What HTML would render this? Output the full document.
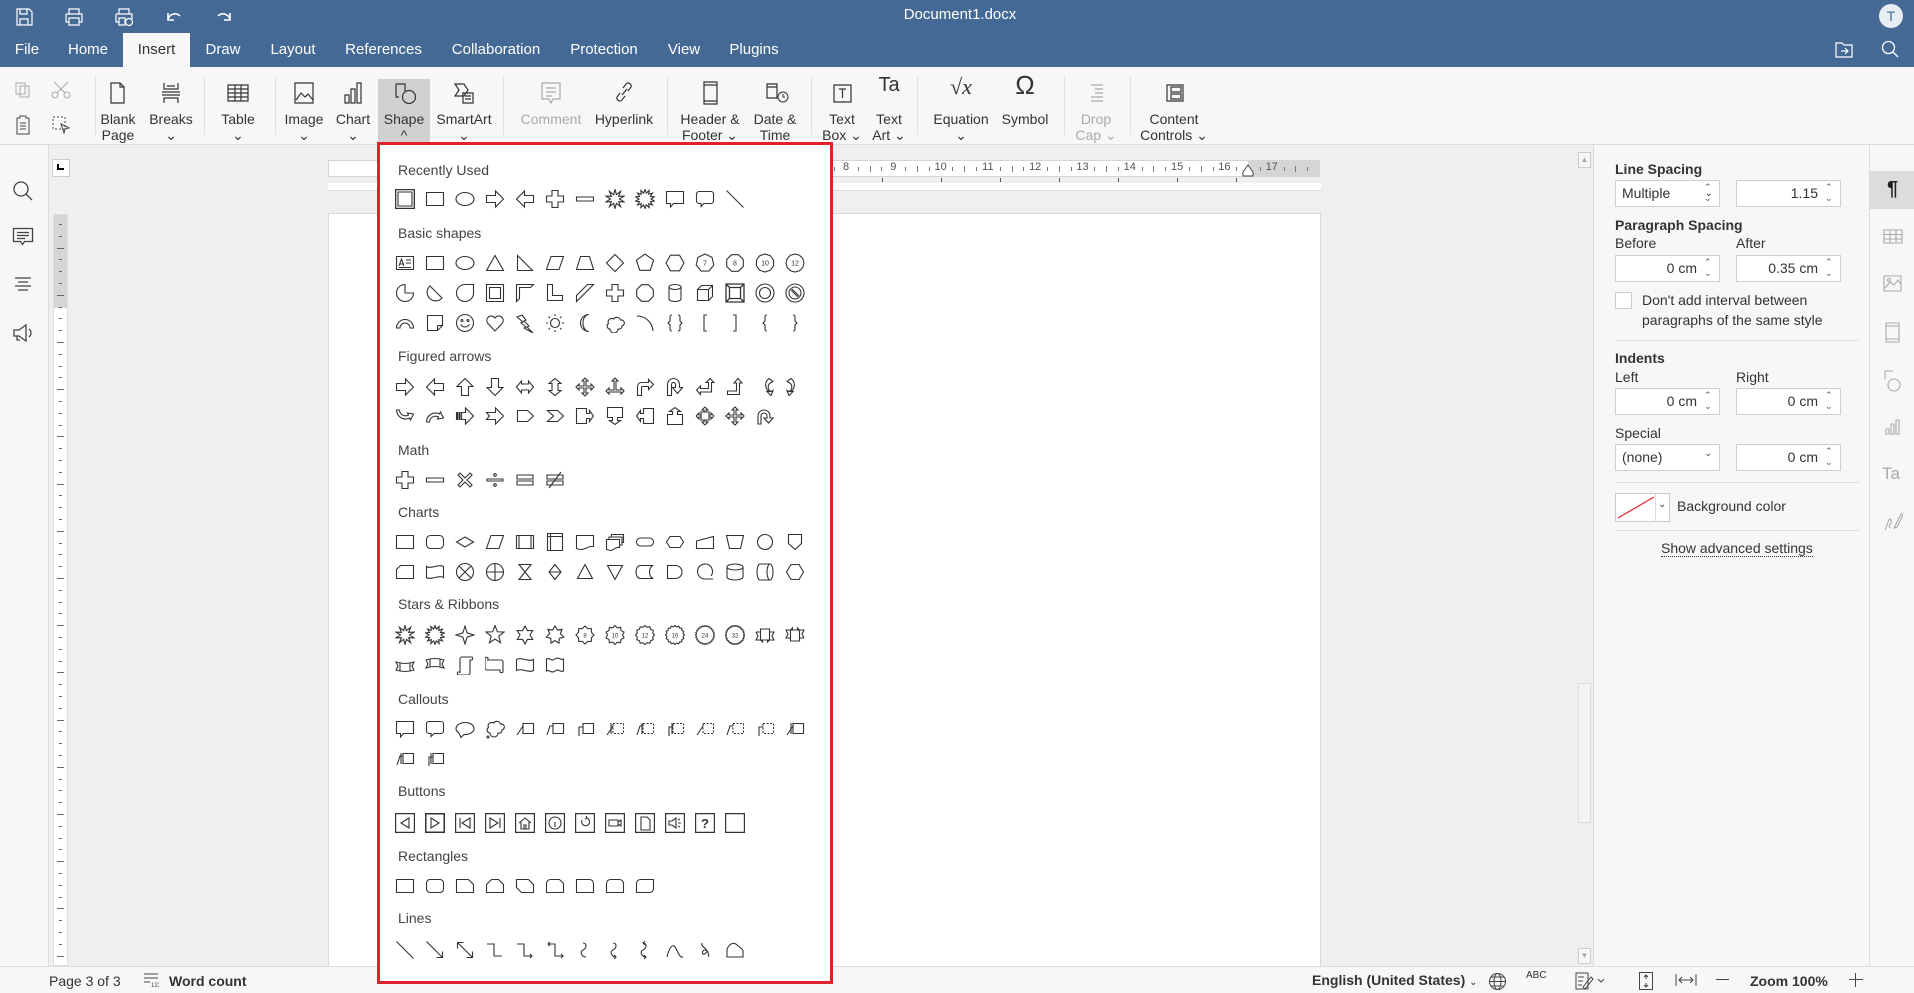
<!DOCTYPE html>
<html><head><meta charset="utf-8">
<style>
*{box-sizing:border-box;margin:0;padding:0}
body{width:1914px;height:993px;overflow:hidden;position:relative;font-family:"Liberation Sans",Arial,sans-serif;background:#efefef;color:#333}
.a{position:absolute}
#top{left:0;top:0;width:1914px;height:67px;background:#446995;color:#fff}
.tab{position:absolute;top:33px;height:34px;line-height:34px;font-size:15px;color:#fff;text-align:center}
#tb{left:0;top:67px;width:1914px;height:78px;background:#f7f7f7;border-bottom:1px solid #dcdcdc}
.lbl{position:absolute;font-size:14px;line-height:16px;text-align:center;color:#333;white-space:nowrap}
.sep{position:absolute;top:10px;width:1px;height:58px;background:#e0e0e0}
.ico{position:absolute}
#left{left:0;top:145px;width:49px;height:821px;background:#f7f7f7;border-right:1px solid #dcdcdc}
#status{left:0;top:966px;width:1914px;height:27px;background:#f7f7f7;border-top:1px solid #dcdcdc;font-size:14px}
#rp{left:1593px;top:145px;width:276px;height:821px;background:#f7f7f7;border-left:1px solid #dcdcdc}
#rs{left:1869px;top:145px;width:45px;height:821px;background:#f7f7f7;border-left:1px solid #dcdcdc}
.rl{position:absolute;font-size:14px;color:#333}
.b{font-weight:bold}
.in{position:absolute;height:27px;background:#fff;border:1px solid #cfcfcf;font-size:14px;line-height:25px;padding:0 6px}
#dd{left:377px;top:142px;width:456px;height:842px;background:#fff;border:3px solid #e3212b}
.h{position:absolute;left:18px;font-size:14px;color:#444}
</style></head><body>

<div id="top" class="a">
 <svg class="a" style="left:14px;top:7px" width="20" height="20" viewBox="0 0 20 20" fill="none" stroke="#fff" stroke-width="1.2"><path d="M3 2h12l3 3v13H3z M6 2v5h7V2 M6 12h8v6H6z"/></svg>
 <svg class="a" style="left:64px;top:7px" width="20" height="20" viewBox="0 0 20 20" fill="none" stroke="#fff" stroke-width="1.2"><path d="M5 7V2h10v5 M2 7h16v8h-3 M5 15H2V7 M5 11h10v7H5z"/></svg>
 <svg class="a" style="left:114px;top:7px" width="20" height="20" viewBox="0 0 20 20" fill="none" stroke="#fff" stroke-width="1.2"><path d="M5 7V2h10v5 M2 7h16v5 M5 15H2V7 M5 11h6v7H5z"/><circle cx="15" cy="15" r="3.5"/></svg>
 <svg class="a" style="left:164px;top:8px" width="20" height="18" viewBox="0 0 20 18" fill="none" stroke="#fff" stroke-width="1.6"><path d="M4 12a7 7 0 0 1 12-4 M4 5v7h6"/></svg>
 <svg class="a" style="left:214px;top:8px" width="20" height="18" viewBox="0 0 20 18" fill="none" stroke="#fff" stroke-width="1.6"><path d="M16 12a7 7 0 0 0-12-4 M16 5v7h-6"/></svg>
 <div class="a" style="left:860px;top:6px;width:200px;text-align:center;font-size:15px;color:#fff">Document1.docx</div>
 <div class="a" style="left:1879px;top:4px;width:24px;height:24px;border-radius:12px;background:#e9eef5;color:#446995;font-size:14px;text-align:center;line-height:24px">T</div>
 <div class="tab" style="left:8px;width:38px">File</div>
 <div class="tab" style="left:63px;width:50px">Home</div>
 <div class="tab" style="left:123px;width:67px;background:#f7f7f7;color:#333">Insert</div>
 <div class="tab" style="left:200px;width:46px">Draw</div>
 <div class="tab" style="left:265px;width:56px">Layout</div>
 <div class="tab" style="left:339px;width:89px">References</div>
 <div class="tab" style="left:447px;width:98px">Collaboration</div>
 <div class="tab" style="left:564px;width:80px">Protection</div>
 <div class="tab" style="left:663px;width:42px">View</div>
 <div class="tab" style="left:724px;width:60px">Plugins</div>
 <svg class="a" style="left:1834px;top:40px" width="20" height="20" viewBox="0 0 20 20" fill="none" stroke="#fff" stroke-width="1.2"><path d="M2 3h6l2 2h8v12H2z M7 11h7 M11 8l3 3-3 3"/></svg>
 <svg class="a" style="left:1880px;top:39px" width="20" height="20" viewBox="0 0 20 20" fill="none" stroke="#fff" stroke-width="1.3"><circle cx="8.5" cy="8.5" r="6"/><path d="M13 13l5 5"/></svg>
</div>

<div id="tb" class="a">
 <div class="a" style="left:378px;top:12px;width:52px;height:63px;background:#d0d0d0"></div>
 <div id="tbi"></div>
</div>

<div id="left" class="a">
 <svg class="a" style="left:12px;top:35px" width="22" height="22" viewBox="0 0 22 22" fill="none" stroke="#444" stroke-width="1.3"><circle cx="9" cy="9" r="7"/><path d="M14 14l6 6"/></svg>
 <svg class="a" style="left:12px;top:81px" width="22" height="22" viewBox="0 0 22 22" fill="none" stroke="#444" stroke-width="1.3"><path d="M1.5 2.5h19v13h-8l-2 3-2-3h-7z M5 6.5h12 M5 9.5h12 M5 12.5h8"/></svg>
 <svg class="a" style="left:12px;top:129px" width="22" height="22" viewBox="0 0 22 22" fill="none" stroke="#444" stroke-width="1.3"><path d="M3 4h16 M6 8h10 M3 12h16 M6 16h10"/></svg>
 <svg class="a" style="left:12px;top:177px" width="22" height="22" viewBox="0 0 22 22" fill="none" stroke="#444" stroke-width="1.3"><path d="M2 8h5l7-5v16l-7-5H2z M5 14v4h3 M17 7a5 5 0 0 1 0 8"/></svg>
</div>

<div class="a" style="left:52px;top:159px;width:18px;height:18px;background:#fff;border:1px solid #ccc"></div>
<div class="a" style="left:57px;top:164px;width:7px;height:6px;border-left:2px solid #000;border-bottom:2px solid #000"></div>
<div class="a" style="left:53px;top:214px;width:15px;height:752px;background:#fff;border:1px solid #ddd"></div>
<div class="a" style="left:54px;top:215px;width:13px;height:93px;background:#d5d5d5"></div>
<div id="vr"></div>
<div class="a" style="left:328px;top:160px;width:992px;height:17px;background:#fff;border:1px solid #d5d5d5"></div>
<div class="a" style="left:1248px;top:161px;width:71px;height:15px;background:#d5d5d5"></div>
<div id="hr"></div>
<div class="a" style="left:328px;top:183px;width:993px;height:8px;background:#fff;border-bottom:1px solid #ddd"></div>
<div class="a" style="left:328px;top:213px;width:993px;height:760px;background:#fff;border:1px solid #d8d8d8"></div>
<div class="a" style="left:1578px;top:152px;width:13px;height:814px;background:#efefef"></div>
<div class="a" style="left:1578px;top:152px;width:13px;height:16px;border:1px solid #ccc;background:#f7f7f7;font-size:8px;color:#aaa;text-align:center;line-height:14px">▲</div>
<div class="a" style="left:1578px;top:683px;width:13px;height:140px;border:1px solid #ddd;background:#f4f4f4"></div>
<div class="a" style="left:1578px;top:948px;width:13px;height:16px;border:1px solid #ccc;background:#f7f7f7;font-size:8px;color:#aaa;text-align:center;line-height:14px">▼</div>

<div id="rp" class="a">
 <div class="rl b" style="left:21px;top:16px">Line Spacing</div>
 <div class="in" style="left:21px;top:35px;width:105px">Multiple<span style="position:absolute;right:6px;font-size:10px">⌄</span></div>
 <div class="in" style="left:142px;top:35px;width:105px;text-align:right;padding-right:22px">1.15</div>
 <div class="rl b" style="left:21px;top:72px">Paragraph Spacing</div>
 <div class="rl" style="left:21px;top:90px">Before</div>
 <div class="rl" style="left:142px;top:90px">After</div>
 <div class="in" style="left:21px;top:110px;width:105px;text-align:right;padding-right:22px">0 cm</div>
 <div class="in" style="left:142px;top:110px;width:105px;text-align:right;padding-right:22px">0.35 cm</div>
 <div class="a" style="left:21px;top:147px;width:17px;height:17px;background:#fff;border:1px solid #ccc"></div>
 <div class="rl" style="left:48px;top:145px;line-height:20px">Don't add interval between<br>paragraphs of the same style</div>
 <div class="a" style="left:21px;top:195px;width:244px;height:1px;background:#ddd"></div>
 <div class="rl b" style="left:21px;top:205px">Indents</div>
 <div class="rl" style="left:21px;top:224px">Left</div>
 <div class="rl" style="left:142px;top:224px">Right</div>
 <div class="in" style="left:21px;top:243px;width:105px;text-align:right;padding-right:22px">0 cm</div>
 <div class="in" style="left:142px;top:243px;width:105px;text-align:right;padding-right:22px">0 cm</div>
 <div class="rl" style="left:21px;top:280px">Special</div>
 <div class="in" style="left:21px;top:299px;width:105px">(none)</div>
 <div class="in" style="left:142px;top:299px;width:105px;text-align:right;padding-right:22px">0 cm</div>
 <div class="a" style="left:21px;top:337px;width:244px;height:1px;background:#ddd"></div>
 <div class="a" style="left:21px;top:348px;width:55px;height:29px;background:#fff;border:1px solid #ccc"></div>
 <div class="a" style="left:61px;top:349px;width:1px;height:27px;background:#ddd"></div>
 <div class="a" style="left:64px;top:354px;font-size:10px;color:#444">⌄</div>
 <svg class="a" style="left:23px;top:351px" width="38" height="23"><path d="M1 22L37 1" stroke="#e3212b" stroke-width="1.2"/></svg>
 <div class="rl" style="left:83px;top:353px">Background color</div>
 <div class="a" style="left:21px;top:385px;width:244px;height:1px;background:#ddd"></div>
 <div class="rl" style="left:67px;top:395px;border-bottom:1px dotted #333">Show advanced settings</div>
 <div id="spins"></div>
</div>
<div id="rs" class="a">
 <div class="a" style="left:0;top:26px;width:45px;height:38px;background:#dcdcdc"></div>
 <div class="a" style="left:0;top:33px;width:45px;text-align:center;font-size:20px;font-weight:bold;color:#222">¶</div>
 <svg class="a" style="left:13px;top:83px" width="20" height="210" viewBox="0 0 20 210" fill="none" stroke="#aaa" stroke-width="1.1">
  <path d="M1 2h18v13H1z M1 6.5h18 M1 11h18 M7 2v13 M13 2v13"/>
  <path d="M1 48h17v15H1z M2 60l5-6 4 3 4-5 3 4"/><circle cx="6" cy="52" r="1.5"/>
  <path d="M3 95h13v19H3z M3 98h13 M3 111h13"/>
  <path d="M2 151v-8h8"/><circle cx="11" cy="157" r="6"/>
  <path d="M3 206h3v-5h-3z M8 206h3v-10h-3z M13 206h3v-14h-3z"/>
 </svg>
 <div class="a" style="left:12px;top:319px;font-size:17px;color:#aaa">Ta</div>
 <svg class="a" style="left:13px;top:365px" width="20" height="22" viewBox="0 0 20 22" fill="none" stroke="#aaa" stroke-width="1.1"><path d="M2 20c3-6 4-14 6-10s-5 6 0 8 M12 16l6-12 2 1-6 12-3 1z"/></svg>
</div>

<div id="status" class="a">
 <div class="a" style="left:49px;top:6px">Page 3 of 3</div>
 <svg class="a" style="left:143px;top:5px" width="16" height="16" viewBox="0 0 16 16" fill="none" stroke="#444"><path d="M1 2h14 M1 6h14 M1 10h6"/><text x="8" y="15" font-size="6" fill="#444" stroke="none">123</text></svg>
 <div class="a b" style="left:169px;top:6px">Word count</div>
 <div class="a b" style="left:1312px;top:5px">English (United States) <span style="font-weight:normal;font-size:10px">⌄</span></div>
 <svg class="a" style="left:1488px;top:5px" width="19" height="19" viewBox="0 0 19 19" fill="none" stroke="#444"><circle cx="9.5" cy="9.5" r="8"/><ellipse cx="9.5" cy="9.5" rx="3.5" ry="8"/><path d="M1.5 9.5h16 M3 5h13 M3 14h13"/></svg>
 <div class="a" style="left:1526px;top:3px;font-size:10px">ABC</div>
 <svg class="a" style="left:1574px;top:4px" width="34" height="20" viewBox="0 0 34 20" fill="none" stroke="#444"><path d="M2 2h12v16H2z M4 6h6 M4 10h5 M4 14h4 M9 16l8-10 2 2-8 10z M24 8l3 3 3-3"/></svg>
 <svg class="a" style="left:1638px;top:4px" width="16" height="20" viewBox="0 0 16 20" fill="none" stroke="#444"><path d="M1.5 1.5h13v17h-13z M8 4v4 M6 6l2-2 2 2 M8 16v-4 M6 14l2 2 2-2"/></svg>
 <svg class="a" style="left:1675px;top:6px" width="22" height="14" viewBox="0 0 22 14" fill="none" stroke="#444"><path d="M1 1v12 M21 1v12 M4 7h14 M7 4l-3 3 3 3 M15 4l3 3-3 3"/></svg>
 <div class="a" style="left:1716px;top:12px;width:13px;height:1px;background:#444"></div>
 <div class="a b" style="left:1750px;top:6px">Zoom 100%</div>
 <div class="a" style="left:1849px;top:12px;width:14px;height:1px;background:#444"></div>
 <div class="a" style="left:1855px;top:6px;width:1px;height:14px;background:#444"></div>
</div>

<div id="dd" class="a">
 <div class="h" style="top:17px">Recently Used</div>
 <div class="h" style="top:80px">Basic shapes</div>
 <div class="h" style="top:203px">Figured arrows</div>
 <div class="h" style="top:297px">Math</div>
 <div class="h" style="top:359px">Charts</div>
 <div class="h" style="top:451px">Stars &amp; Ribbons</div>
 <div class="h" style="top:546px">Callouts</div>
 <div class="h" style="top:638px">Buttons</div>
 <div class="h" style="top:703px">Rectangles</div>
 <div class="h" style="top:765px">Lines</div>
 <div id="grid"></div>
</div>

<script>
function P(d){return '<path d="'+d+'"/>';}
function star(n,ro,ri,t){var s='';for(var i=0;i<2*n;i++){var r=i%2?ri:ro,a=Math.PI*i/n-Math.PI/2;s+=(10+r*Math.cos(a)).toFixed(2)+','+(10+r*Math.sin(a)).toFixed(2)+' ';}return '<polygon points="'+s+'"/>'+(t?'<text x="10" y="12.3" font-size="6" text-anchor="middle" fill="#333" stroke="none" font-family="Liberation Sans">'+t+'</text>':'');}
function poly(n,r,t,off){var s='';off=off||0;for(var i=0;i<n;i++){var a=2*Math.PI*i/n-Math.PI/2+off;s+=(10+r*Math.cos(a)).toFixed(2)+','+(10+r*Math.sin(a)).toFixed(2)+' ';}return '<polygon points="'+s+'"/>'+(t?'<text x="10" y="12.5" font-size="7" text-anchor="middle" fill="#333" stroke="none" font-family="Liberation Sans">'+t+'</text>':'');}
function R(x,g){return '<g transform="rotate('+x+' 10 10)">'+g+'</g>';}
function F(g){return '<g transform="translate(20 0) scale(-1 1)">'+g+'</g>';}
var S={};
S.rect=P("M1.5 3.5h17v13h-17z");
S.dbl='<path d="M0.5 0.5h19v19h-19z" stroke-width="1.6"/>'+P("M3 3h14v14h-14z");
S.ell='<ellipse cx="10" cy="10" rx="9" ry="6.5"/>';
S.ra=P("M1.5 6.5h9v-4.5l8 8-8 8v-4.5h-9z");S.la=F(S.ra);S.ua=R(-90,S.ra);S.da=R(90,S.ra);
S.plus=P("M7 1.5h6v5.5h5.5v6h-5.5v5.5h-6v-5.5h-5.5v-6h5.5z");
S.minus=P("M1.5 8h17v4h-17z");
S.b1=star(10,9.5,4.5);S.b2=star(14,9.5,6);
S.crect=P("M1.5 2.5h17v12h-10l-3 3.5v-3.5h-4z");
S.cround=P("M4 2.5h12a2.5 2.5 0 0 1 2.5 2.5v7a2.5 2.5 0 0 1-2.5 2.5h-7l-3 3v-3h-2a2.5 2.5 0 0 1-2.5-2.5v-7a2.5 2.5 0 0 1 2.5-2.5z");
S.line=P("M1.5 1.5l17 17");
S.tbox=P("M1.5 3.5h17v13h-17z M4 13l2.5-7 2.5 7 M5 11h3 M11 7h5 M11 10h5 M4 14.5h12");
S.tri=P("M10 2.5l8.5 15h-17z");S.rtri=P("M2.5 2.5l15 15h-15z");
S.para=P("M6 3.5h12.5l-4.5 13h-12.5z");S.trap=P("M5.5 3.5h9l4 13h-17z");
S.dia=P("M10 1.5l8.5 8.5-8.5 8.5-8.5-8.5z");S.pent=poly(5,9);S.hex=poly(6,9,0,Math.PI/2);
S.p7=poly(7,9,'7');S.p8=poly(8,9,'8',Math.PI/8);S.p10=poly(10,9,'10');S.p12=poly(12,9,'12');
S.pie=P("M10 1.5a8.5 8.5 0 1 0 8.5 8.5h-8.5z");S.chord=P("M5 3a8.5 8.5 0 1 0 12 12z");
S.tear=P("M10 1.5h8.5v8.5a8.5 8.5 0 1 1-8.5-8.5z");
S.frame=P("M1.5 1.5h17v17h-17z M4.5 4.5h11v11h-11z");
S.half=P("M1.5 1.5h17l-3 3h-11v11l-3 3z");S.L=P("M2.5 1.5h5v11h10v5h-15z");
S.diag=P("M1.5 18.5v-6l11-11h6z");S.oct=poly(8,9,0,Math.PI/8);
S.can=P("M4 4a6 2.5 0 0 1 12 0v12a6 2.5 0 0 1-12 0z M4 4a6 2.5 0 0 0 12 0");
S.cube=P("M2.5 6.5h11v11h-11z M2.5 6.5l4-4h11v11l-4 4 M13.5 6.5l4-4");
S.bevel='<path d="M1 1h18v18h-18z M4.5 4.5h11v11h-11z M1 1l3.5 3.5 M19 1l-3.5 3.5 M1 19l3.5-3.5 M19 19l-3.5-3.5" stroke-width="1.3"/>';
S.donut='<circle cx="10" cy="10" r="9"/><circle cx="10" cy="10" r="5.5"/>';
S.no='<circle cx="10" cy="10" r="9"/><circle cx="10" cy="10" r="6"/>'+P("M6 7l7 7 M7 6l7 7");
S.arcb=P("M1.5 15a8.5 8.5 0 0 1 17 0h-3.5a5 5 0 0 0-10 0z");
S.fold=P("M2.5 2.5h15v10l-5 5h-10z M12.5 17.5v-5h5");
S.smile='<circle cx="10" cy="10" r="8.5"/><circle cx="7" cy="7.5" r="1"/><circle cx="13" cy="7.5" r="1"/>'+P("M5.5 11.5q4.5 5 9 0");
S.heart=P("M10 18l-7.5-8a4.5 4.5 0 0 1 7.5-5 4.5 4.5 0 0 1 7.5 5z");
S.bolt=P("M2 4l5-2 4 5-2 1 5 5-2 1 6 6-9-5 2-1-5-4 2-1z");
S.sun='<circle cx="10" cy="10" r="4.5"/>'+P("M10 1v2 M10 17v2 M1 10h2 M17 10h2 M3.5 3.5l1.5 1.5 M15 15l1.5 1.5 M3.5 16.5l1.5-1.5 M15 5l1.5-1.5");
S.moon=P("M14 1.5a8.5 8.5 0 0 0 0 17 6 8.5 0 0 1 0-17z");
S.cloud=P("M5 16a3 3 0 0 1-1.5-5.5 3.5 3.5 0 0 1 5-4.5 4 4 0 0 1 7 1 3 3 0 0 1 1.5 6 3 3 0 0 1-4 3 3.5 3.5 0 0 1-8 0z");
S.arc=P("M2 3a16 16 0 0 1 16 15");
S.bp=P("M7 2c-2 0-2 1-2 3v3l-2 2 2 2v3c0 2 0 3 2 3 M13 2c2 0 2 1 2 3v3l2 2-2 2v3c0 2 0 3-2 3");
S.bkl=P("M12 2h-3v16h3");S.bkr=F(S.bkl);
S.brl=P("M12 2c-2 0-2 1-2 3v3l-2 2 2 2v3c0 2 0 3 2 3");S.brr=F(S.brl);
S.lr=P("M1.5 10l5-6v3h7v-3l5 6-5 6v-3h-7v3z");S.ud=R(90,S.lr);
S.quad=P("M10 1l3 3h-2v5h5v-2l3 3-3 3v-2h-5v5h2l-3 3-3-3h2v-5h-5v2l-3-3 3-3v2h5v-5h-2z");
S.lru=P("M10 1l3 3h-2v9h5v-2l3 3-3 3v-2h-12v2l-3-3 3-3v2h5v-9h-2z");
S.bent=P("M2.5 18.5v-9a4 4 0 0 1 4-4h7v-3l5 5-5 5v-3h-6a1 1 0 0 0-1 1v8z");
S.ut=P("M2.5 18.5v-11a6 6 0 0 1 12 0v3h3l-5 6-5-6h3v-3a2 2 0 0 0-4 0v11z");
S.lu=P("M1.5 13l4-4v2.5h8v-6h-2.5l4-4 4 4h-2.5v9.5h-11v2.5z");
S.bu=P("M2.5 17.5v-3.5h9v-8h-2.5l4-4.5 4 4.5h-2.5v11.5z");
S.cr=P("M14 1.5a8 8 0 0 0 0 13l-2 0 4 4 2-5-2 1a5 5 0 0 1 0-9l2-1z");S.cl=F(S.cr);
S.cu=P("M1.5 4a9 9 0 0 0 13 8l1 2 3-6-6-1 1 2a6 6 0 0 1-9-5z");
S.cd=P("M1.5 16a9 9 0 0 1 13-8l1-2 3 6-6 1 1-2a6 6 0 0 0-9 5z");
S.str=P("M1.5 6.5h1v7h-1z M4 6.5h1v7h-1z M6.5 6.5h4v-4.5l8 8-8 8v-4.5h-4z");
S.notch=P("M1.5 6.5h9v-4.5l8 8-8 8v-4.5h-9l3-3.5z");
S.pentA=P("M2.5 4.5h10l6 5.5-6 5.5h-10z");S.chev=P("M2.5 4.5h10l6 5.5-6 5.5h-10l6-5.5z");
S.rc=P("M1.5 2.5h10v5h3v-3l4 5.5-4 5.5v-3h-3v5h-10z");S.dc=R(90,S.rc);S.lc=F(S.rc);S.uc=R(-90,S.rc);
S.qc=P("M6 6h8v8h-8z M10 1l3 3h-2v2 M10 1l-3 3h2v2 M10 19l3-3h-2v-2 M10 19l-3-3h2v-2 M1 10l3-3v2h2 M1 10l3 3v-2h2 M19 10l-3-3v2h-2 M19 10l-3 3v-2h-2");
S.qc2=S.quad;
S.circ=P("M3 18v-8a6 6 0 0 1 12 0v2h3l-4.5 5-4.5-5h3v-2a3 3 0 0 0-6 0v8z");
S.mul=P("M3 5l2-2 5 5 5-5 2 2-5 5 5 5-2 2-5-5-5 5-2-2 5-5z");
S.div=P("M2 9h16v2h-16z")+'<circle cx="10" cy="5" r="1.3"/><circle cx="10" cy="15" r="1.3"/>';
S.eq=P("M2 5h16v4h-16z M2 11h16v4h-16z");S.neq=S.eq+P("M4 18l12-16");
S.alt='<rect x="1.5" y="3.5" width="17" height="13" rx="4"/>';
S.dec=P("M10 5l8.5 5-8.5 5-8.5-5z");S.pre=P("M1.5 3.5h17v13h-17z M4 3.5v13 M16 3.5v13");
S.ist=P("M2.5 1.5h15v17h-15z M2.5 4.5h15 M5.5 1.5v17");
S.doc=P("M1.5 3.5h17v11c-5-1-8 3-12 3-3 0-5-1-5-1z");
S.mdoc=P("M1.5 7.5h13v8c-4-1-6 3-9 3l-4-1z M4 7.5v-2.5h13v8h-2.5 M6.5 5v-2.5h12v8h-1.5");
S.term='<rect x="1.5" y="6" width="17" height="8" rx="4"/>';
S.prep=P("M5 4.5h10l3.5 5.5-3.5 5.5h-10l-3.5-5.5z");
S.mi=P("M1.5 9l17-4.5v12h-17z");S.mo=P("M1.5 3.5h17l-3 13h-11z");
S.con='<circle cx="10" cy="10" r="7.5"/>';S.off=P("M3.5 2.5h13v9l-6.5 6-6.5-6z");
S.card=P("M5.5 3.5h13v13h-17v-9z");S.tape=P("M1.5 4.5c4 3 13-3 17 0v11c-4-3-13 3-17 0z");
S.sum='<circle cx="10" cy="10" r="8.5"/>'+P("M4 4l12 12 M16 4l-12 12");
S.or='<circle cx="10" cy="10" r="8.5"/>'+P("M10 1.5v17 M1.5 10h17");
S.col=P("M4 2.5h12l-12 15h12z");S.sort=P("M10 2.5l6 7.5-6 7.5-6-7.5z M4 10h12");
S.ext=P("M10 2.5l7.5 14h-15z");S.mer=P("M2.5 3.5h15l-7.5 14z");
S.sto=P("M5 3.5h13.5a4 6.5 0 0 0 0 13h-13.5a4 6.5 0 0 1 0-13z");
S.del=P("M2.5 3.5h8a6.5 6.5 0 0 1 0 13h-8z");S.seq=P("M18 17h-8a7.5 7.5 0 1 1 6-3");
S.disk=P("M2 5a8 3 0 0 1 16 0v10a8 3 0 0 1-16 0z M2 5a8 3 0 0 0 16 0");
S.dir=P("M5 2a3 8 0 0 0 0 16h10a3 8 0 0 0 0-16z M15 2a3 8 0 0 0 0 16");
S.disp=P("M6 2.5h8l4.5 7.5-4.5 7.5h-8l-4.5-7.5z");
S.s4=star(4,9,3);S.s5=star(5,9.5,4);S.s6=star(6,9,5);S.s7=star(7,9,5.5);
S.s8=star(8,9,7,'8');S.s10=star(10,9.5,7.5,'10');S.s12=star(12,9.5,8,'12');S.s16=star(16,9.5,8.3,'16');S.s24=star(24,9.5,8.5,'24');S.s32=star(32,9.5,8.7,'32');
S.rib=P("M1 7h4.5v-3h9v3h4.5l-2 4 2 4h-4.5 M1 7l2 4-2 4h4.5 M5.5 7v8h9v-8 M5.5 15l2 2v-2 M14.5 15l-2 2v-2");
S.ribd=R(180,S.rib);S.crib=P("M1 7q9 3 18 0l-2 4 2 4q-9 3-18 0l2-4z M5 8v8 M15 8v8");S.cribd=R(180,S.crib);
S.vs=P("M5 4a2 2 0 0 1 2-2h10a2 2 0 0 1 0 3h-2v13a2 2 0 0 1-2 2h-10a2 2 0 0 1 0-3h2z M5 17v1");
S.hs=R(90,S.vs);
S.wave=P("M1.5 4.5c5-3 12 3 17 0v11c-5 3-12-3-17 0z");S.dwave=P("M1.5 4c3-2 5 3 8.5 0s6 2 8.5 0v12c-3 2-5-3-8.5 0s-6-2-8.5 0z");
S.ovc='<path d="M4 14a9 6 0 1 1 5 1.5l-3 3z"/>';
S.clc=S.cloud.replace('M5 16','M5 14')+'<circle cx="3" cy="18" r="1"/>';
var L1=P("M8 4.5h10.5v10h-10.5z"),LD='<path d="M8 4.5h10.5v10h-10.5z" stroke-dasharray="2 1.5"/>';
S.lc1=L1+P("M8 7l-6 9");S.lc2=L1+P("M8 7h-3l-3 9");S.lc3=L1+P("M8 8h-4v9");
S.lc4=LD+P("M8 7l-6 9 M6 4v11");S.lc5=LD+P("M8 7h-3l-3 9 M7 4v11");S.lc6=LD+P("M8 8h-4v9 M7 4v11");
S.lc7=LD+P("M8 7l-6 9");S.lc8=LD+P("M8 7h-3l-3 9");S.lc9=LD+P("M8 8h-4v9");
S.lc10=L1+P("M8 7l-6 9 M6 4v11");S.lc11=L1+P("M8 7h-3l-3 9 M6 4v11");S.lc12=L1+P("M8 8h-4v9 M6 4v11");
var B='<path d="M0.5 0.5h19v19h-19z" stroke-width="1.4"/>';
S.bb=B+P("M14 5v10l-8-5z");S.bf='<path d="M0.5 0.5h19v19h-19z" stroke-width="2"/>'+P("M6 5v10l8-5z");
S.bs=B+P("M5 5v10 M15 5v10l-8-5z");S.be=B+P("M15 5v10 M5 5v10l8-5z");
S.bh=B+P("M4 10l6-5 6 5 M6 9v7h8v-7 M9 16v-4h2v4");S.bi=B+'<circle cx="10" cy="10" r="6"/>'+P("M10 9v5");
S.br=B+P("M7 7a4 4 0 1 0 5-2 M12 5l-1-2 M12 5l-2 1");S.bm=B+P("M4 7h9v6h-9z M13 9l3-2v6l-3-2");
S.bd=B+P("M6 4h6l3 3v10h-9z");S.bsnd=B+P("M4 8h3l4-3v10l-4-3h-3z M13 7l2-1 M13 10h3 M13 13l2 1");
S.bq=B+'<text x="10" y="15" font-size="13" font-weight="bold" text-anchor="middle" fill="#333" stroke="none" font-family="Liberation Sans">?</text>';
S.bbl=B;
S.r2='<rect x="1.5" y="3.5" width="17" height="13" rx="3.5"/>';
S.r3=P("M1.5 3.5h12l5 5v8h-17z");S.r4=P("M6.5 3.5h7l5 5v8h-17v-8z");S.r5=P("M1.5 3.5h12l5 5v8h-12l-5-5z");
S.r6=P("M1.5 16.5v-9a4 4 0 0 1 4-4h9l4 4v9z");S.r7=P("M1.5 3.5h13a4 4 0 0 1 4 4v9h-17z");
S.r8=P("M5.5 3.5h9a4 4 0 0 1 4 4v9h-17v-9a4 4 0 0 1 4-4z");S.r9=P("M5.5 3.5h13v9a4 4 0 0 1-4 4h-13v-9a4 4 0 0 1 4-4z");
S.la1=P("M1.5 1.5l16 16 M17.5 11.5v6h-6");S.la2=P("M2.5 2.5l15 15 M17.5 11.5v6h-6 M2.5 8.5v-6h6");
S.el=P("M2 4h7v12h8");S.ela=P("M2 4h7v12h8 M15 14l2 2-2 2");S.elb=P("M3 4h7v12h8 M5 2l-2 2 2 2 M16 14l2 2-2 2");
S.cv=P("M8 3c4 0 4 5 0 7s-1 7 3 7");S.cva=S.cv+P("M9 15l2 2-2 2");S.cvb=S.cv+P("M9 15l2 2-2 2 M10 1l-2 2 2 2");
S.crv=P("M2 17c2-8 5-14 8-10s4 11 8 10");S.scr=P("M7 3c-2 4 8 6 4 10s-5-3-1-3 3 5 4 7");S.fs=P("M2 17v-8c3-6 7-7 10-4s7 4 6 8v4z");
var rows=[
[44,['dbl','rect','ell','ra','la','plus','minus','b1','b2','crect','cround','line']],
[108,['tbox','rect','ell','tri','rtri','para','trap','dia','pent','hex','p7','p8','p10','p12']],
[138,['pie','chord','tear','frame','half','L','diag','plus','oct','can','cube','bevel','donut','no']],
[168,['arcb','fold','smile','heart','bolt','sun','moon','cloud','arc','bp','bkl','bkr','brl','brr']],
[232,['ra','la','ua','da','lr','ud','quad','lru','bent','ut','lu','bu','cr','cl']],
[261,['cu','cd','str','notch','pentA','chev','rc','dc','lc','uc','qc','qc2','circ']],
[325,['plus','minus','mul','div','eq','neq']],
[387,['rect','alt','dec','para','pre','ist','doc','mdoc','term','prep','mi','mo','con','off']],
[417,['card','tape','sum','or','col','sort','ext','mer','sto','del','seq','disk','dir','disp']],
[480,['b1','b2','s4','s5','s6','s7','s8','s10','s12','s16','s24','s32','rib','ribd']],
[510,['crib','cribd','vs','hs','wave','dwave']],
[574,['crect','cround','ovc','clc','lc1','lc2','lc3','lc4','lc5','lc6','lc7','lc8','lc9','lc10']],
[604,['lc11','lc12']],
[668,['bb','bf','bs','be','bh','bi','br','bm','bd','bsnd','bq','bbl']],
[731,['rect','r2','r3','r4','r5','r6','r7','r8','r9']],
[795,['line','la1','la2','el','ela','elb','cv','cva','cvb','crv','scr','fs']]];
var h='';rows.forEach(function(r){r[1].forEach(function(k,i){h+='<svg style="position:absolute;left:'+(15+30*i)+'px;top:'+r[0]+'px" width="20" height="20" viewBox="0 0 20 20" fill="none" stroke="#333" stroke-width="1.1">'+(S[k]||S.rect)+'</svg>';});});
document.getElementById('grid').innerHTML=h;

var T=[
[97,'Blank<br>Page','M5 2h9l4 4v16H5z M14 2v4h4'],
[140,'Breaks<br>⌄','M5 2v6h14V2 M8 5h8 M3 11h18 M3 14h18 M5 22v-5h14v5'],
[195,'Table<br>⌄','M2 4h20v16H2z M2 8h20 M2 12h20 M2 16h20 M9 4v16 M15 4v16'],
[249,'Image<br>⌄','M3 2h18v20H3z M4 19l5-7 4 4 3-3 5 6'],
[289,'Chart<br>⌄','M4 14h4v8H4z M10 8h4v14h-4z M16 2h4v20h-4z'],
[331,'Shape<br>^','M4 3h9v7 M4 3v13h3'],
[380,'SmartArt<br>⌄','M3 3h9l4 6-4 6H3l4-6z M11 12h10v10H11z M13 15h6 M13 18h6'],
[451,'Comment','M3 2h18v16h-7l-2 4-2-4H3z M7 7h10 M7 11h10 M7 15h6','#aaa'],
[511,'Hyperlink','M10 14l5-6 M8 12l-3 4a3 3 0 0 0 5 3l3-4 M16 10l3-4a3 3 0 0 0-5-3l-3 4'],
[582,'Header &amp;<br>Footer ⌄','M6 1h13v22H6z M6 4h13 M6 20h13'],
[635,'Date &amp;<br>Time','M4 3h10v14H4z M4 6h10'],
[690,'Text<br>Box ⌄','M4 4h17v17H4z M9 8h7 M12.5 8v9'],
[728,'Text<br>Art ⌄',''],
[787,'Equation<br>⌄',''],
[840,'Symbol',''],
[898,'Drop<br>Cap ⌄','M7 4h12 M11 8h8 M11 12h8 M7 16h12 M7 20h12','#aaa'],
[962,'Content<br>Controls ⌄','M5 4h16v16H5z M9 6h10v5H9z M9 13h10v5H9z']];
var t='';T.forEach(function(x){var L=Math.round(x[0]*1.2207);var c=x[3]||'#333';
if(x[2])t+='<svg class="ico" style="left:'+(L-12)+'px;top:13px" width="24" height="26" viewBox="0 0 24 24" fill="none" stroke="'+c+'" stroke-width="1.2"><path d="'+x[2]+'"/></svg>';
t+='<div class="lbl" style="left:'+(L-50)+'px;width:100px;top:44px;color:'+(x[3]||'#333')+'">'+x[1]+'</div>';});
t+='<svg class="ico" style="left:'+(Math.round(331*1.2207)-3)+'px;top:22px" width="16" height="16"><circle cx="8" cy="8" r="6.5" fill="none" stroke="#333" stroke-width="1.2"/></svg>';
t+='<svg class="ico" style="left:'+(Math.round(635*1.2207)+2)+'px;top:24px" width="12" height="12"><circle cx="6" cy="6" r="5" fill="none" stroke="#333"/><path d="M6 3v3h2" stroke="#333" fill="none"/></svg>';
t+='<div class="lbl" style="left:'+(Math.round(728*1.2207)-12)+'px;top:10px;font-size:20px;width:24px">Ta</div>';
t+='<div class="lbl" style="left:'+(Math.round(787*1.2207)-15)+'px;top:12px;font-size:22px;font-family:Liberation Serif;font-style:italic;width:30px">√x</div>';
t+='<div class="lbl" style="left:'+(Math.round(840*1.2207)-15)+'px;top:10px;font-size:26px;width:30px">Ω</div>';
t+='<svg class="ico" style="left:14px;top:14px" width="18" height="18" viewBox="0 0 18 18" fill="none" stroke="#aaa"><path d="M2 2h9v11H2z M6 5h9v11H6z"/></svg>';
t+='<svg class="ico" style="left:51px;top:14px" width="20" height="18" viewBox="0 0 20 18" fill="none" stroke="#aaa"><circle cx="4" cy="14" r="3"/><circle cx="16" cy="14" r="3"/><path d="M6 12L17 1 M14 12L3 1"/></svg>';
t+='<svg class="ico" style="left:14px;top:48px" width="18" height="20" viewBox="0 0 18 20" fill="none" stroke="#444"><path d="M3 3h3v-2h6v2h3v16H3z M6 8h6 M6 11h6 M6 14h6"/></svg>';
t+='<svg class="ico" style="left:51px;top:48px" width="20" height="20" viewBox="0 0 20 20" fill="none" stroke="#444"><path d="M2 2h12v12H2z" stroke-dasharray="2 2"/><path d="M10 9l8 4-4 1-1 4z"/></svg>';
[78,167,225,412,546,664,751,872,926].forEach(function(s){t+='<div class="sep" style="left:'+Math.round(s*1.2207)+'px"></div>';});
document.getElementById('tbi').innerHTML=t;

var hr='';
for(var i=-5;i<=17;i++){var x=846+(i-8)*47.3;if(x<330||x>1315)continue;
 if(i>0)hr+='<div class="a" style="left:'+(x-8)+'px;top:161px;width:16px;text-align:center;font-size:11px;color:#555">'+i+'</div>';
 [0.25,0.5,0.75].forEach(function(f){var xx=x+f*47.3;if(xx<1316)hr+='<div class="a" style="left:'+xx+'px;top:'+(f==0.5?166:167)+'px;width:1px;height:'+(f==0.5?6:4)+'px;background:#777"></div>';});}
[882,941,1000,1059,1118,1177,1236].forEach(function(x){hr+='<div class="a" style="left:'+x+'px;top:178px;width:1px;height:4px;background:#555"></div>';});
hr+='<svg class="a" style="left:1242px;top:163px" width="12" height="14"><path d="M1 13h10V9L6 2 1 9z" fill="#fff" stroke="#444"/></svg>';
document.getElementById('hr').innerHTML=hr;
var vr='';for(var y=224;y<960;y+=11.8){var k=Math.round((y-224)/11.8)%4;vr+='<div class="a" style="left:'+(k==2?57:59)+'px;top:'+Math.round(y)+'px;width:'+(k==2?7:3)+'px;height:1px;background:#666"></div>';}
document.getElementById('vr').innerHTML=vr;
var sp='';[[35,126],[35,247],[110,126],[110,247],[243,126],[243,247],[299,247]].forEach(function(p){sp+='<div class="a" style="left:'+(p[1]-16)+'px;top:'+(p[0]+2)+'px;font-size:9px;line-height:11px;color:#555">⌃<br>⌄</div>';});
sp+='<div class="a" style="left:110px;top:303px;font-size:10px;color:#555">⌄</div>';
document.getElementById('spins').innerHTML=sp;
</script>
</body></html>
